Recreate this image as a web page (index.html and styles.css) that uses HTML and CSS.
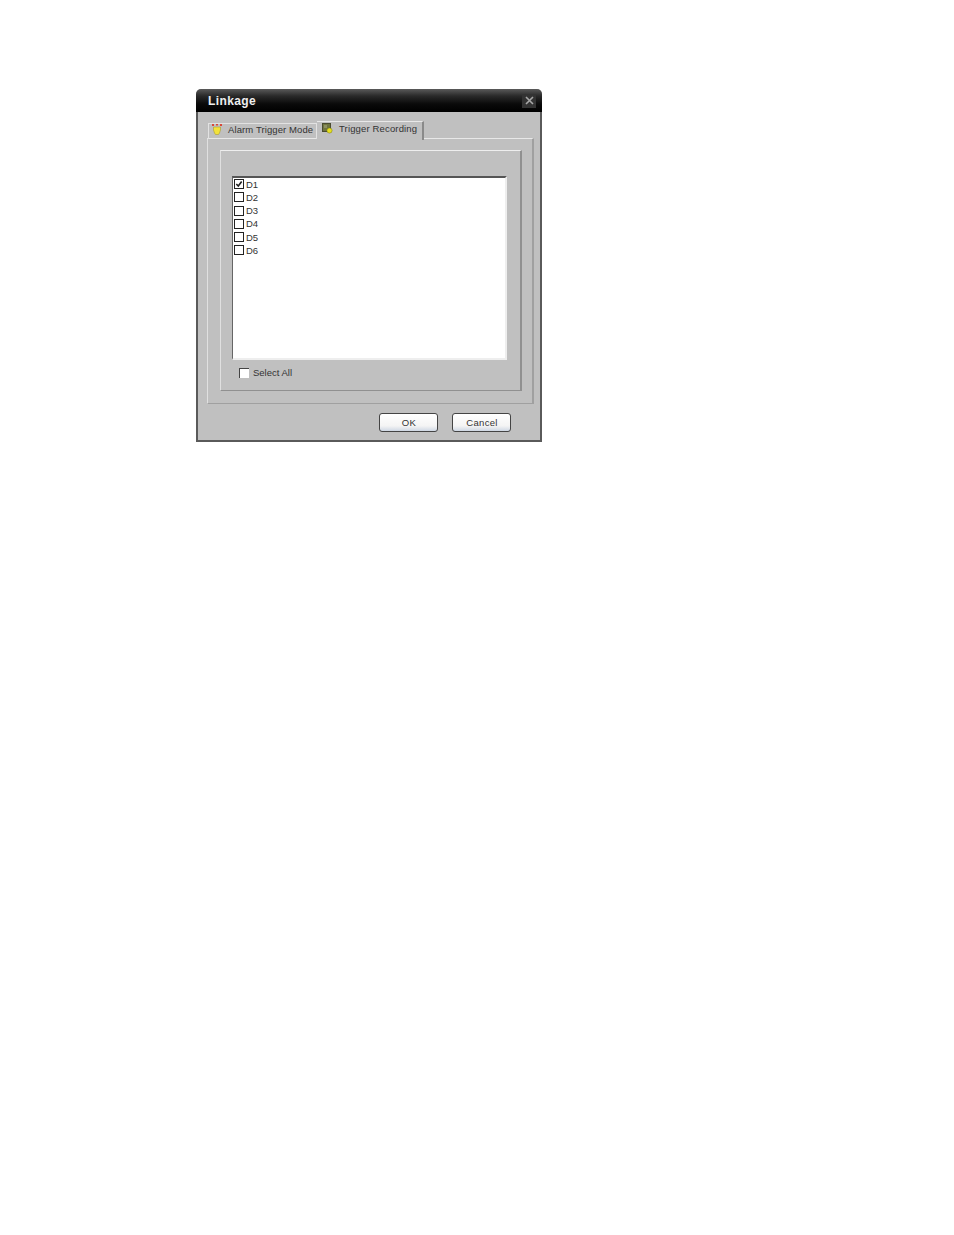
FILE: index.html
```html
<!DOCTYPE html>
<html lang="en">
<head>
    <meta charset="UTF-8">
    <title>Linkage</title>
    <link rel="stylesheet" href="styles.css">
</head>
<body>
<div class="dialog">
    <div class="titleBar">
        <span class="titleText">Linkage</span>
        <span class="closeBtn">
            <svg width="9" height="9" viewBox="0 0 9 9"><path d="M1 1L8 8M8 1L1 8" stroke="#a8a8a8" stroke-width="1.600" fill="none"/></svg>
        </span>
    </div>
    <div class="content">
        <div class="tabs">
            <div class="tab tabOff">
                <svg class="tabIcon" width="10" height="11" viewBox="0 0 10 11">
                    <path d="M0 0h2v2H0zM4 0h2v1.500H4zM8 0h2v2H8z" fill="#d8483a"/>
                    <path d="M1.500 3h7v3l-1 3-1 1.500h-3l-1-1.500-1-3z" fill="#f2e23c" stroke="#a09028" stroke-width=".5"/>
                </svg>
                <span>Alarm Trigger Mode</span>
            </div>
            <div class="tab tabOn">
                <svg class="tabIcon" width="11" height="11" viewBox="0 0 11 11">
                    <rect x="0.500" y="0.500" width="8" height="8" fill="#6f7440" stroke="#4a4c30"/>
                    <rect x="2" y="2" width="3" height="3" fill="#8d9160"/>
                    <circle cx="7.500" cy="7.500" r="2.600" fill="#e6e01e" stroke="#77761a" stroke-width=".5"/>
                </svg>
                <span>Trigger Recording</span>
            </div>
        </div>
        <div class="tabPane">
            <div class="group">
                <ul class="list">
                    <li class="item"><span class="check">
                        <svg width="8" height="8" viewBox="0 0 9 9"><path d="M1.500 4.500L3.700 6.800L7.500 1.800" stroke="#222" stroke-width="1.800" fill="none"/></svg>
                    </span>D1</li>
                    <li class="item"><span class="check"></span>D2</li>
                    <li class="item"><span class="check"></span>D3</li>
                    <li class="item"><span class="check"></span>D4</li>
                    <li class="item"><span class="check"></span>D5</li>
                    <li class="item"><span class="check"></span>D6</li>
                </ul>
                <div class="selectAll"><span class="check2"></span>Select All</div>
            </div>
        </div>
        <div class="buttons">
            <div class="btn">OK</div>
            <div class="btn">Cancel</div>
        </div>
    </div>
</div>
</body>
</html>
```

FILE: styles.css
```css
* {
    margin: 0;
    padding: 0;
    box-sizing: border-box;
}

body {
    background: #fff;
    font: 9.500px/13px "Liberation Sans", Arial, sans-serif;
    color: #333;
}

ul {
    list-style: none;
}

.dialog {
    width: 346px;
    height: 353px;
    margin: 89px 0 0 196px;
    border-radius: 5px 5px 0 0;
    overflow: hidden;
    background: #c0c0c0;
    display: flex;
    flex-direction: column;
}

.titleBar {
    height: 23px;
    flex: none;
    display: flex;
    align-items: center;
    justify-content: space-between;
    padding: 0 6px 0 12px;
    background: linear-gradient(#5a5a5a, #2a2a2a 30%, #0a0a0a 65%, #000);
}

.titleText {
    color: #eee;
    font: bold 12px/16px "Liberation Sans", Arial, sans-serif;
    letter-spacing: .4px;
}

.closeBtn {
    width: 14px;
    height: 14px;
    background: #333;
    display: flex;
    align-items: center;
    justify-content: center;
}

.content {
    flex: 1;
    border: 2px solid #5a5a5a;
    border-top: 0;
    padding: 9px 6px 0 9px;
    display: flex;
    flex-direction: column;
}

.tabs {
    display: flex;
    height: 18px;
    flex: none;
    position: relative;
    z-index: 1;
}

.tab {
    display: flex;
    align-items: center;
}

.tabIcon {
    flex: none;
}

.tabOff {
    width: 109px;
    height: 16px;
    margin: 2px 0 0 1px;
    padding: 0 0 4px 3px;
    border: 1px solid #e2e2e2;
    border-bottom: 0;
    gap: 6px;
    letter-spacing: .1px;
}

.tabOn {
    width: 107px;
    height: 19px;
    padding: 0 0 5px 5px;
    gap: 6px;
    letter-spacing: .15px;
    background: #c0c0c0;
    border-top: 1px solid #e8e8e8;
    border-right: 2px solid #8a8a8a;
}

.tabPane {
    width: 327px;
    height: 266px;
    margin-top: -1px;
    padding: 11px 10px 13px 12px;
    border: 1px solid #a0a0a0;
    border-top-color: #e8e8e8;
    border-left-color: #e0e0e0;
    border-right-width: 2px;
}

.group {
    height: 241px;
    padding: 25px 13px 0 11px;
    border: 1px solid #909090;
    border-top-color: #eee;
    border-left-color: #e0e0e0;
    border-right-width: 2px;
}

.list {
    height: 184px;
    padding: 0 0 0 1px;
    background: #fff;
    border-top: 2px solid #555;
    border-left: 1px solid #666;
    border-right: 2px solid #eee;
    border-bottom: 2px solid #eee;
}

.item {
    display: flex;
    align-items: center;
    gap: 2px;
    height: 12px;
    margin-bottom: 1.300px;
}

.check {
    width: 10px;
    height: 10px;
    border: 1.500px solid #222;
    display: flex;
    align-items: center;
    justify-content: center;
}

.selectAll {
    display: flex;
    align-items: center;
    gap: 4px;
    margin: 6px 0 0 7px;
}

.check2 {
    width: 10px;
    height: 10px;
    background: #fff;
    border-top: 1px solid #444;
    border-left: 1px solid #444;
}

.buttons {
    display: flex;
    justify-content: flex-end;
    gap: 14px;
    margin: 9px 23px 0 0;
}

.btn {
    width: 59px;
    height: 19px;
    padding-left: 1px;
    line-height: 18px;
    text-align: center;
    letter-spacing: .3px;
    border: 1px solid #444;
    border-radius: 3px;
    background: linear-gradient(#fff, #f4f4f4 70%, #cfd8e4);
}
```
